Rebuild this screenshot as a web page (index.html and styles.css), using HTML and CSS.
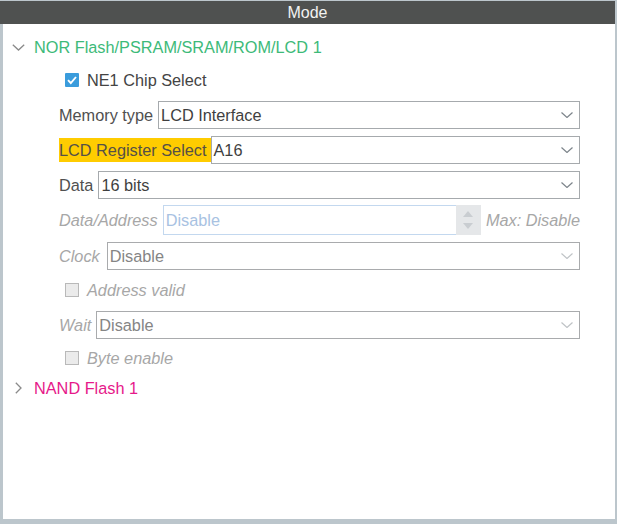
FILE: index.html
```html
<!DOCTYPE html>
<html>
<head>
<meta charset="utf-8">
<link rel="stylesheet" href="styles.css">
</head>
<body>
<div class="frame">
  <div class="header">Mode</div>
  <div class="panel">
    <div class="node">
      <span class="twisty"><svg width="13" height="7" viewBox="0 0 13 7"><path d="M0.8 0.8 L6.5 6 L12.2 0.8" fill="none" stroke="#8a8a8a" stroke-width="1.3"/></svg></span>
      <span class="node-title green">NOR Flash/PSRAM/SRAM/ROM/LCD 1</span>
    </div>
    <div class="fields">
      <div class="row check-row">
        <span class="cb checked"><svg width="14" height="14" viewBox="0 0 14 14"><path d="M3 7.2 L5.8 10 L11 4" fill="none" stroke="#fff" stroke-width="1.9"/></svg></span>
        <span class="cb-label">NE1 Chip Select</span>
      </div>
      <div class="row">
        <span class="lbl">Memory type</span>
        <div class="select"><span>LCD Interface</span><svg class="arrow" width="12" height="6" viewBox="0 0 12 6"><path d="M0.5 0.5 L6 5.5 L11.5 0.5" fill="none" stroke="#7d858b" stroke-width="1.2"/></svg></div>
      </div>
      <div class="row">
        <span class="lbl hl">LCD Register Select</span>
        <div class="select"><span>A16</span><svg class="arrow" width="12" height="6" viewBox="0 0 12 6"><path d="M0.5 0.5 L6 5.5 L11.5 0.5" fill="none" stroke="#7d858b" stroke-width="1.2"/></svg></div>
      </div>
      <div class="row">
        <span class="lbl">Data</span>
        <div class="select"><span>16 bits</span><svg class="arrow" width="12" height="6" viewBox="0 0 12 6"><path d="M0.5 0.5 L6 5.5 L11.5 0.5" fill="none" stroke="#7d858b" stroke-width="1.2"/></svg></div>
      </div>
      <div class="row disabled">
        <span class="lbl">Data/Address</span>
        <div class="input"><span>Disable</span></div>
        <div class="spinner">
          <svg width="10" height="6" viewBox="0 0 10 6"><path d="M0 6 L5 0 L10 6 Z" fill="#c9cdd1"/></svg>
          <svg width="10" height="6" viewBox="0 0 10 6"><path d="M0 0 L5 6 L10 0 Z" fill="#c9cdd1"/></svg>
        </div>
        <span class="max">Max: Disable</span>
      </div>
      <div class="row disabled shift">
        <span class="lbl short">Clock</span>
        <div class="select"><span>Disable</span><svg class="arrow" width="12" height="6" viewBox="0 0 12 6"><path d="M0.5 0.5 L6 5.5 L11.5 0.5" fill="none" stroke="#bfc3c6" stroke-width="1.2"/></svg></div>
      </div>
      <div class="row check-row disabled">
        <span class="cb"></span>
        <span class="cb-label">Address valid</span>
      </div>
      <div class="row disabled">
        <span class="lbl">Wait</span>
        <div class="select"><span>Disable</span><svg class="arrow" width="12" height="6" viewBox="0 0 12 6"><path d="M0.5 0.5 L6 5.5 L11.5 0.5" fill="none" stroke="#bfc3c6" stroke-width="1.2"/></svg></div>
      </div>
      <div class="row check-row disabled tight">
        <span class="cb"></span>
        <span class="cb-label">Byte enable</span>
      </div>
    </div>
    <div class="node node-last">
      <span class="twisty right"><svg width="7" height="12" viewBox="0 0 7 12"><path d="M0.8 0.8 L6 6 L0.8 11.2" fill="none" stroke="#8a8a8a" stroke-width="1.3"/></svg></span>
      <span class="node-title magenta">NAND Flash 1</span>
    </div>
  </div>
</div>
</body>
</html>
```
FILE: styles.css
```css
html, body {
  margin: 0;
  padding: 0;
}
body {
  background: #bcc6cc;
  font-family: "Liberation Sans", Arial, sans-serif;
  font-size: 16.3px;
  color: #4a4a4a;
}
.frame {
  width: 617px;
  height: 524px;
  display: flex;
  flex-direction: column;
}
.header {
  margin-top: 1px;
  width: 615px;
  height: 23px;
  line-height: 23px;
  background: #4f5150;
  color: #f2f2f2;
  text-align: center;
  font-size: 16px;
}
.panel {
  margin-left: 3px;
  width: 612px;
  height: 495px;
  box-sizing: border-box;
  background: #ffffff;
  padding-top: 9px;
}
.node {
  height: 28px;
  display: flex;
  align-items: center;
}
.twisty {
  width: 31px;
  padding-left: 9px;
  box-sizing: border-box;
  display: flex;
  align-items: center;
}
.twisty.right {
  padding-left: 12px;
}
.twisty svg {
  display: block;
}
.green {
  color: #3dba79;
}
.magenta {
  color: #e6198a;
}
.node-last {
  margin-top: 2px;
}
.fields {
  margin-top: 5px;
  padding-left: 56px;
  padding-right: 35px;
  display: flex;
  flex-direction: column;
  gap: 7px;
}
.row {
  height: 28px;
  display: flex;
  align-items: center;
}
.row.shift {
  margin-top: 1px;
  margin-bottom: -1px;
}
.row.tight {
  margin-top: -2px;
}
.check-row {
  padding-left: 6px;
}
.cb {
  width: 14px;
  height: 14px;
  box-sizing: border-box;
  border: 1px solid #b9b9b9;
  background: #ebebeb;
  margin-right: 8px;
  flex: none;
}
.cb.checked {
  border: none;
  background: #3a9cdc;
  border-radius: 1px;
}
.cb svg {
  display: block;
}
.cb-label {
  color: #444;
  white-space: nowrap;
}
.lbl {
  padding-right: 5px;
  white-space: nowrap;
  color: #505050;
}
.lbl.short {
  padding-right: 7px;
}
.lbl.hl {
  background: #ffcc00;
  height: 24px;
  line-height: 24px;
  padding-right: 4px;
  color: #555047;
}
.select {
  flex: 1;
  height: 28px;
  box-sizing: border-box;
  border: 1px solid #a6aaad;
  display: flex;
  align-items: center;
  justify-content: space-between;
  padding-left: 2px;
  padding-right: 6px;
  color: #3f3f3f;
  background: #fff;
}
.select .arrow {
  display: block;
  flex: none;
}
.disabled .lbl,
.disabled .cb-label,
.disabled .max {
  font-style: italic;
  color: #a7a7a7;
}
.disabled .select {
  color: #858585;
  border-color: #a9abad;
}
.input {
  flex: 1;
  height: 30px;
  box-sizing: border-box;
  border: 1px solid #c3d8ef;
  border-right: none;
  display: flex;
  align-items: center;
  padding-left: 2px;
  color: #a8c2e2;
}
.spinner {
  width: 25px;
  height: 30px;
  background: #e5e7e9;
  display: flex;
  flex-direction: column;
  align-items: center;
  justify-content: center;
  gap: 6px;
}
.spinner svg {
  display: block;
}
.max {
  margin-left: 5px;
  white-space: nowrap;
}
```
